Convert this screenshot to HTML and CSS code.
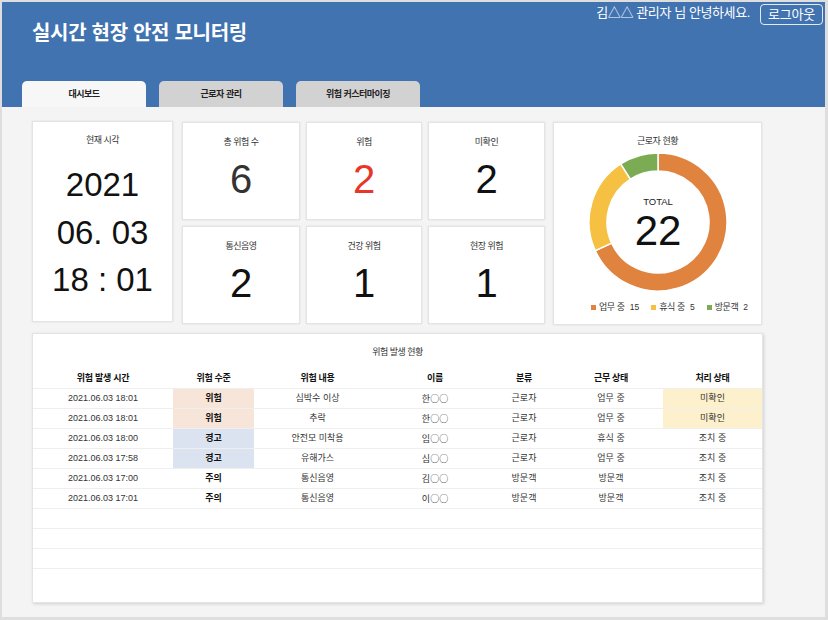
FILE: index.html
```html
<!DOCTYPE html>
<html lang="ko">
<head>
<meta charset="utf-8">
<title>실시간 현장 안전 모니터링</title>
<link rel="stylesheet" href="styles.css">
</head>
<body>
<div class="app">
  <header class="header">
    <div class="header-top">
      <h1 class="title">실시간 현장 안전 모니터링</h1>
      <div class="user">
        <span class="greet">김<span class="cjk">△△</span> 관리자 님 안녕하세요.</span>
        <button class="logout">로그아웃</button>
      </div>
    </div>
    <nav class="tabs">
      <div class="tab active">대시보드</div>
      <div class="tab">근로자 관리</div>
      <div class="tab">위험 커스터마이징</div>
    </nav>
  </header>

  <main class="main">
    <section class="top">
      <div class="card clock">
        <div class="card-title">현재 시각</div>
        <div class="clock-lines">
          <div>2021</div>
          <div>06. 03</div>
          <div>18 : 01</div>
        </div>
      </div>

      <div class="stats">
        <div class="card stat"><div class="card-title stat-title">총 위험 수</div><div class="stat-num soft">6</div></div>
        <div class="card stat"><div class="card-title stat-title">위험</div><div class="stat-num red">2</div></div>
        <div class="card stat"><div class="card-title stat-title">미확인</div><div class="stat-num">2</div></div>
        <div class="card stat"><div class="card-title stat-title">통신음영</div><div class="stat-num">2</div></div>
        <div class="card stat"><div class="card-title stat-title">건강 위험</div><div class="stat-num">1</div></div>
        <div class="card stat"><div class="card-title stat-title">현장 위험</div><div class="stat-num">1</div></div>
      </div>

      <div class="card donut-card">
        <div class="card-title">근로자 현황</div>
        <svg class="donut" viewBox="0 0 140 140" width="140" height="140">
          <path d="M70 1 A69 69 0 1 1 7.24 98.66 L23.61 91.19 A51 51 0 1 0 70 19 Z" fill="#e0833f" stroke="#fff" stroke-width="1.5"/>
          <path d="M7.24 98.66 A69 69 0 0 1 32.70 11.96 L42.43 27.10 A51 51 0 0 0 23.61 91.19 Z" fill="#f6c143" stroke="#fff" stroke-width="1.5"/>
          <path d="M32.70 11.96 A69 69 0 0 1 70 1 L70 19 A51 51 0 0 0 42.43 27.10 Z" fill="#7bab53" stroke="#fff" stroke-width="1.5"/>
          <text x="70" y="52.5" text-anchor="middle" class="total-label">TOTAL</text>
          <text x="70" y="93" text-anchor="middle" class="total-num">22</text>
        </svg>
        <div class="legend">
          <div class="legend-item"><span class="sw sw-orange"></span>업무 중<span class="n">15</span></div>
          <div class="legend-item"><span class="sw sw-yellow"></span>휴식 중<span class="n">5</span></div>
          <div class="legend-item"><span class="sw sw-green"></span>방문객<span class="n">2</span></div>
        </div>
      </div>
    </section>

    <section class="card table-card">
      <div class="card-title">위험 발생 현황</div>
      <table class="risk-table">
        <colgroup>
          <col class="c1"><col class="c2"><col class="c3"><col class="c4"><col class="c5"><col class="c6"><col class="c7">
        </colgroup>
        <thead>
          <tr><th>위험 발생 시간</th><th>위험 수준</th><th>위험 내용</th><th>이름</th><th>분류</th><th>근무 상태</th><th>처리 상태</th></tr>
        </thead>
        <tbody>
          <tr><td>2021.06.03 18:01</td><td class="lv lv-danger">위험</td><td>심박수 이상</td><td class="cjk">한○○</td><td>근로자</td><td>업무 중</td><td class="st-new">미확인</td></tr>
          <tr><td>2021.06.03 18:01</td><td class="lv lv-danger">위험</td><td>추락</td><td class="cjk">한○○</td><td>근로자</td><td>업무 중</td><td class="st-new">미확인</td></tr>
          <tr><td>2021.06.03 18:00</td><td class="lv lv-warn">경고</td><td>안전모 미착용</td><td class="cjk">임○○</td><td>근로자</td><td>휴식 중</td><td>조치 중</td></tr>
          <tr><td>2021.06.03 17:58</td><td class="lv lv-warn">경고</td><td>유해가스</td><td class="cjk">심○○</td><td>근로자</td><td>업무 중</td><td>조치 중</td></tr>
          <tr><td>2021.06.03 17:00</td><td class="lv">주의</td><td>통신음영</td><td class="cjk">김○○</td><td>방문객</td><td>방문객</td><td>조치 중</td></tr>
          <tr><td>2021.06.03 17:01</td><td class="lv">주의</td><td>통신음영</td><td class="cjk">이○○</td><td>방문객</td><td>방문객</td><td>조치 중</td></tr>
          <tr class="empty"><td></td><td></td><td></td><td></td><td></td><td></td><td></td></tr>
          <tr class="empty"><td></td><td></td><td></td><td></td><td></td><td></td><td></td></tr>
          <tr class="empty"><td></td><td></td><td></td><td></td><td></td><td></td><td></td></tr>
        </tbody>
      </table>
    </section>
  </main>
</div>
</body>
</html>
```

FILE: styles.css
```css
html, body {
  margin: 0;
  padding: 0;
}

body {
  width: 828px;
  height: 620px;
  overflow: hidden;
  background: #dedede;
  font-family: "Liberation Sans", "Noto Sans CJK KR", sans-serif;
}

.cjk {
  font-family: "Noto Sans CJK KR", sans-serif;
}

.app {
  margin: 2px 0 0 2px;
  width: 823px;
  height: 615px;
  background: #f4f4f4;
  display: flex;
  flex-direction: column;
}

/* ---------- header ---------- */
.header {
  background: #4173b0;
  height: 105px;
  display: flex;
  flex-direction: column;
  justify-content: space-between;
}

.header-top {
  display: flex;
  justify-content: space-between;
  align-items: flex-start;
  padding: 0 2px 0 30px;
}

.title {
  margin: 18px 0 0;
  font-size: 20px;
  line-height: 26px;
  font-weight: 700;
  color: #fff;
  letter-spacing: -0.3px;
}

.user {
  display: flex;
  align-items: center;
  gap: 10px;
  margin-top: 2px;
}

.greet {
  color: #fff;
  font-size: 13px;
  line-height: 18px;
  letter-spacing: -0.4px;
  margin-top: -4px;
}

.logout {
  height: 21px;
  padding: 0 7px;
  border: 1px solid rgba(255, 255, 255, 0.85);
  border-radius: 4px;
  background: transparent;
  color: #fff;
  font-family: inherit;
  font-size: 13px;
  line-height: 18px;
  letter-spacing: -0.2px;
}

.tabs {
  display: flex;
  gap: 13px;
  padding-left: 20px;
}

.tab {
  width: 124px;
  height: 26px;
  line-height: 27px;
  text-align: center;
  background: #d3d2d3;
  border-radius: 5px 5px 0 0;
  font-size: 9px;
  font-weight: 700;
  letter-spacing: -0.5px;
  color: #222;
}

.tab.active {
  background: #f7f7f7;
}

/* ---------- main ---------- */
.main {
  padding: 14px 0 0 30px;
  display: flex;
  flex-direction: column;
  gap: 8px;
}

.top {
  display: flex;
  align-items: flex-start;
  gap: 9px;
}

.card {
  background: #fff;
  border: 1px solid #e4e4e4;
  box-shadow: 0 0 2px rgba(0, 0, 0, 0.1);
  box-sizing: border-box;
}

.card-title {
  padding-top: 11px;
  font-size: 9px;
  line-height: 14px;
  letter-spacing: -0.5px;
  color: #333;
  text-align: center;
}

.clock {
  width: 141px;
  height: 201px;
  text-align: center;
}

.clock-lines {
  margin-top: 14px;
  font-size: 33px;
  line-height: 47.5px;
  color: #111;
}

.stats {
  display: grid;
  grid-template-columns: 118px 116px 117px;
  grid-auto-rows: 98px;
  gap: 6px;
  margin-top: 1px;
}

.stat {
  text-align: center;
}

.stat-title {
  padding-top: 12px;
}

.stat-num {
  margin-top: 8px;
  font-size: 40px;
  line-height: 44px;
  color: #111;
}

.stat-num.soft {
  color: #333;
}

.stat-num.red {
  color: #e8362a;
}

.donut-card {
  width: 209px;
  height: 203px;
  margin-top: 1px;
  margin-left: -1px;
}

.donut {
  display: block;
  margin: 4px auto 0;
}

.total-label {
  font-family: "Liberation Sans", sans-serif;
  font-size: 9.5px;
  fill: #222;
}

.total-num {
  font-family: "Liberation Sans", sans-serif;
  font-size: 42px;
  fill: #111;
}

.legend {
  display: flex;
  justify-content: center;
  gap: 12px;
  margin-top: 8px;
  padding-left: 24px;
  font-size: 9px;
  line-height: 14px;
  letter-spacing: -0.4px;
  color: #333;
}

.legend-item {
  display: flex;
  align-items: center;
}

.sw {
  width: 5px;
  height: 5px;
  margin-right: 3px;
}

.sw-orange { background: #e0833f; }
.sw-yellow { background: #f6c143; }
.sw-green { background: #7bab53; }

.legend .n {
  margin-left: 5px;
  font-size: 8.5px;
  letter-spacing: 0;
}

/* ---------- table ---------- */
.table-card {
  width: 731px;
  height: 270px;
  box-shadow: 1px 1px 3px rgba(0, 0, 0, 0.15);
}

.risk-table {
  width: 729px;
  margin-top: 10px;
  border-collapse: collapse;
  table-layout: fixed;
  font-size: 9px;
  color: #333;
}

.c1 { width: 140px; }
.c2 { width: 81px; }
.c3 { width: 127px; }
.c4 { width: 108px; }
.c5 { width: 70px; }
.c6 { width: 104px; }
.c7 { width: 99px; }

.risk-table th,
.risk-table td {
  padding: 0;
  height: 19px;
  line-height: 19px;
  text-align: center;
  border-bottom: 1px solid #efefef;
  white-space: nowrap;
}

.risk-table th {
  font-weight: 700;
  color: #111;
  letter-spacing: -0.3px;
}

.risk-table td.lv {
  font-weight: 700;
  color: #111;
}

.lv-danger { background: #f8e5d9; }
.lv-warn { background: #dce3f0; }
.st-new { background: #fdf1cd; }
```
